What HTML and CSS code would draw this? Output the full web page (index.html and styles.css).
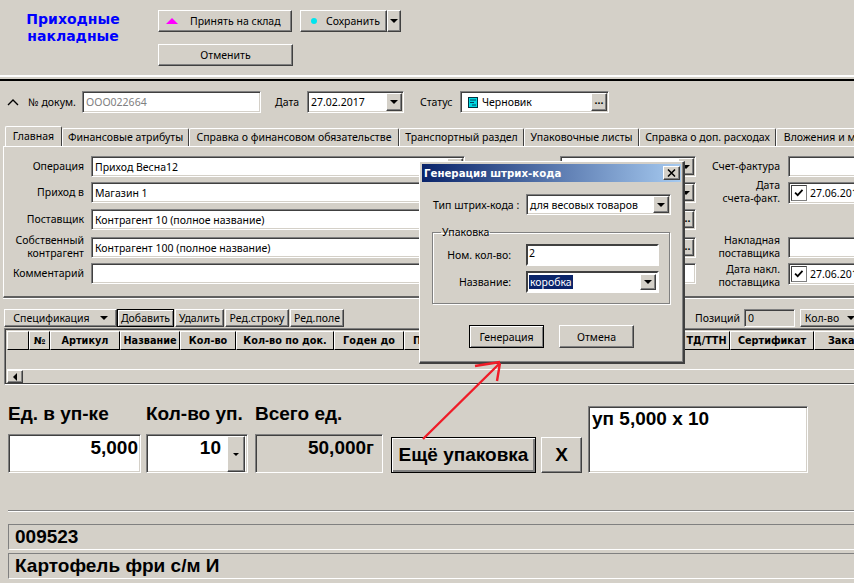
FILE: index.html
```html
<!DOCTYPE html>
<html lang="en">
  <head>
    <meta charset="UTF-8" />
    <title>Приходные накладные</title>
    <link rel="stylesheet" href="styles.css">
  </head>
  <body>
    <div class="page">
      <!-- Top buttons -->
      <div class="header">
        <div class="title">Приходные<br />накладные</div>
        <div class="actions">
          <div class="action-row">
            <div class="btn raised accept">
              <svg class="icon" width="12" height="6" viewBox="0 0 12 6"><polygon points="6,0 12,6 0,6" fill="#ff00ff" /></svg>
              <span>Принять на склад</span>
            </div>
            <div class="btn raised save">
              <svg class="icon" width="6" height="6" viewBox="0 0 6 6"><circle cx="3" cy="3" r="3" fill="#00e5ee" /></svg>
              <span>Сохранить</span>
            </div>
            <div class="btn raised save-drop"><i class="arrow"></i></div>
          </div>
          <div class="btn raised cancel">Отменить</div>
        </div>
      </div>
      <div class="divider"></div>

      <!-- Document row -->
      <div class="doc-row">
        <svg class="chevron" width="12" height="7" viewBox="0 0 12 7"><path d="M1 6 L6 1 L11 6" fill="none" stroke="#000" stroke-width="1.4" /></svg>
        <span class="doc-label">№ докум.</span>
        <div class="field sunken doc-num">OOO022664</div>
        <span class="date-label">Дата</span>
        <div class="field sunken doc-date">27.02.2017<div class="drop raised"><i class="arrow"></i></div></div>
        <span class="status-label">Статус</span>
        <div class="field sunken doc-status">
          <svg class="status-icon" width="10" height="11" viewBox="0 0 10 11">
            <rect x="0.5" y="0.5" width="9" height="10" fill="#00d8e0" stroke="#003040" />
            <path d="M2 3 H8 M2 5.5 H6 M4 8 H8" stroke="#004060" />
          </svg>
          Черновик
          <div class="drop raised dots">...</div>
        </div>
      </div>

      <!-- Tabs -->
      <div class="tabs">
        <div class="tab active">Главная</div>
        <div class="tab w-fin">Финансовые атрибуты</div>
        <div class="tab w-ref">Справка о финансовом обязательстве</div>
        <div class="tab w-trans">Транспортный раздел</div>
        <div class="tab w-pack">Упаковочные листы</div>
        <div class="tab w-extra">Справка о доп. расходах</div>
        <div class="tab w-att">Вложения и метки</div>
      </div>
      <div class="panel">
        <div class="form">
          <label class="lbl">Операция</label>
          <div class="field sunken">Приход Весна12<div class="drop raised"><i class="arrow"></i></div></div>
          <div class="field sunken mid"><div class="drop raised"><i class="arrow"></i></div></div>
          <label class="lbl">Счет-фактура</label>
          <div class="field sunken right"></div>

          <label class="lbl">Приход в</label>
          <div class="field sunken">Магазин 1</div>
          <div class="field sunken mid"><div class="drop raised"><i class="arrow"></i></div></div>
          <label class="lbl two">Дата<br />счета-факт.</label>
          <div class="field sunken right date-check">
            <svg class="check" width="16" height="16" viewBox="0 0 16 16"><path d="M3.5 7.5 L6.5 10.5 L12 4.5" fill="none" stroke="#000" stroke-width="2" /></svg>
            27.06.2017
          </div>

          <label class="lbl">Поставщик</label>
          <div class="field sunken">Контрагент 10 (полное название)</div>
          <div class="field sunken mid"><div class="drop raised dots">...</div></div>
          <span></span>
          <span></span>

          <label class="lbl two">Собственный<br />контрагент</label>
          <div class="field sunken">Контрагент 100 (полное название)</div>
          <div class="field sunken mid"><div class="drop raised dots">...</div></div>
          <label class="lbl two">Накладная<br />поставщика</label>
          <div class="field sunken right"></div>

          <label class="lbl">Комментарий</label>
          <div class="field sunken"></div>
          <div class="field sunken mid"></div>
          <label class="lbl two flat">Дата накл.<br />поставщика</label>
          <div class="field sunken right date-check">
            <svg class="check" width="16" height="16" viewBox="0 0 16 16"><path d="M3.5 7.5 L6.5 10.5 L12 4.5" fill="none" stroke="#000" stroke-width="2" /></svg>
            27.06.2017
          </div>
        </div>
      </div>

      <!-- Specification table -->
      <div class="toolbar">
        <div class="tool raised spec">Спецификация<i class="arrow"></i></div>
        <div class="tool raised add">Добавить</div>
        <div class="tool raised del">Удалить</div>
        <div class="tool raised row-edit">Ред.строку</div>
        <div class="tool raised cell-edit">Ред.поле</div>
        <span class="pos-label">Позиций</span>
        <div class="field sunken pos-input">0</div>
        <div class="tool raised qty">Кол-во<i class="arrow"></i></div>
      </div>
      <div class="grid-wrap">
        <div class="grid-head">
          <div class="cell c-blank"></div>
          <div class="cell c-num">№</div>
          <div class="cell c-art">Артикул</div>
          <div class="cell c-name">Название</div>
          <div class="cell c-qty">Кол-во</div>
          <div class="cell c-doc">Кол-во по док.</div>
          <div class="cell c-exp">Годен до</div>
          <div class="cell c-maker">Производитель</div>
          <div class="cell c-ttn">ТД/ТТН</div>
          <div class="cell c-cert">Сертификат</div>
          <div class="cell c-order">Заказ</div>
        </div>
        <div class="grid-body"></div>
        <div class="scroll">
          <div class="scroll-btn raised"><i class="arrow-left"></i></div>
        </div>
      </div>

      <!-- Packing -->
      <div class="packing">
        <div class="pack-col w-unit">
          <div class="pack-label">Ед. в уп-ке</div>
          <div class="pack-field sunken">5,000</div>
        </div>
        <div class="pack-col w-count">
          <div class="pack-label">Кол-во уп.</div>
          <div class="pack-field sunken count">10<div class="spin raised"><i class="arrow tiny"></i></div></div>
        </div>
        <div class="pack-col w-total">
          <div class="pack-label">Всего ед.</div>
          <div class="pack-field sunken total">50,000г</div>
        </div>
        <div class="big-btn more">Ещё упаковка</div>
        <div class="big-btn raised remove">X</div>
        <div class="memo sunken">уп 5,000 x 10</div>
      </div>
      <div class="rule"></div>
      <div class="info">009523</div>
      <div class="info">Картофель фри с/м И</div>

      <!-- Dialog -->
      <div class="dialog raised">
        <div class="dialog-title">
          <span>Генерация штрих-кода</span>
          <div class="close raised">
            <svg width="9" height="8" viewBox="0 0 9 8"><path d="M1 0.5 L8 7.5 M8 0.5 L1 7.5" stroke="#000" stroke-width="1.5" /></svg>
          </div>
        </div>
        <div class="dialog-type">
          <span>Тип штрих-кода :</span>
          <div class="field sunken type-field">для весовых товаров<div class="drop raised"><i class="arrow"></i></div></div>
        </div>
        <fieldset class="group">
          <legend>Упаковка</legend>
          <div class="group-row">
            <span class="group-label">Ном. кол-во:</span>
            <div class="field deep num-field">2</div>
          </div>
          <div class="group-row">
            <span class="group-label">Название:</span>
            <div class="field deep name-field"><span class="selected">коробка</span><div class="drop raised"><i class="arrow"></i></div></div>
          </div>
        </fieldset>
        <div class="dialog-btns">
          <div class="btn raised dlg-btn default">Генерация</div>
          <div class="btn raised dlg-btn">Отмена</div>
        </div>
      </div>

      <!-- Red arrow drawn over the screen -->
      <svg class="red-arrow" width="854" height="583" viewBox="0 0 854 583">
        <path d="M423 439 L499 364 M475 366 L500 362 M497 381 L500 363" fill="none" stroke="#f01c28" stroke-width="2.4" />
      </svg>
    </div>
  </body>
</html>
```

FILE: styles.css
```css
* {
  margin: 0;
  padding: 0;
  box-sizing: border-box;
}

body {
  background-color: #d4d0c8;
  font-family: "Noto Sans", sans-serif;
  font-size: 10.5px;
  color: #000;
}

.page {
  position: relative;
  width: 854px;
  height: 583px;
  overflow: hidden;
}

.raised {
  background-color: #d4d0c8;
  border: 1px solid;
  border-color: #fff #404040 #404040 #fff;
  box-shadow: inset -1px -1px 0 #808080;
}

.sunken {
  background-color: #fff;
  border: 1px solid;
  border-color: #808080 #fff #fff #808080;
  box-shadow: inset 1px 1px 0 #404040, inset -1px -1px 0 #d4d0c8;
}

.arrow {
  display: inline-block;
  width: 0;
  height: 0;
  border-left: 4px solid transparent;
  border-right: 4px solid transparent;
  border-top: 4px solid #000;
}

.arrow.tiny {
  border-left-width: 3px;
  border-right-width: 3px;
  border-top-width: 3px;
}

.arrow-left {
  display: inline-block;
  width: 0;
  height: 0;
  border-top: 4px solid transparent;
  border-bottom: 4px solid transparent;
  border-right: 4px solid #000;
}

/* Header */
.header {
  display: flex;
  height: 75px;
}

.title {
  width: 146px;
  padding-top: 11px;
  font-family: "DejaVu Sans", sans-serif;
  font-weight: bold;
  font-size: 14px;
  line-height: 17px;
  color: #0000ff;
  text-align: center;
}

.actions {
  margin-left: 12px;
  padding-top: 10px;
}

.action-row {
  display: flex;
  margin-bottom: 12px;
}

.btn {
  display: flex;
  align-items: center;
  justify-content: center;
  height: 22px;
}

.accept {
  width: 134px;
  justify-content: flex-start;
  padding-left: 7px;
}

.accept .icon {
  margin-right: 12px;
}

.save {
  width: 87px;
  margin-left: 8px;
  justify-content: flex-start;
  padding-left: 10px;
}

.save .icon {
  margin-right: 9px;
}

.save-drop {
  width: 14px;
}

.cancel {
  width: 135px;
}

.divider {
  height: 6px;
  border-top: 2px solid #fff;
  border-bottom: 2px solid #000;
}

/* Document row */
.field {
  position: relative;
  display: flex;
  align-items: center;
  height: 22px;
  padding-left: 3px;
  white-space: nowrap;
  overflow: hidden;
}

.drop {
  position: absolute;
  right: 1px;
  top: 1px;
  bottom: 1px;
  width: 16px;
  display: flex;
  align-items: center;
  justify-content: center;
}

.dots {
  font-weight: bold;
  line-height: 8px;
  padding-bottom: 4px;
}

.doc-row {
  display: flex;
  align-items: center;
  height: 22px;
  margin-top: 10px;
  padding-left: 7px;
}

.chevron {
  margin-right: 9px;
}

.doc-label {
  width: 54px;
}

.doc-num {
  width: 179px;
  color: #808080;
}

.date-label {
  margin-left: 14px;
  width: 32px;
}

.doc-date {
  width: 97px;
}

.status-label {
  margin-left: 16px;
  width: 40px;
}

.doc-status {
  width: 149px;
}

.status-icon {
  margin: 0 4px;
}

/* Tabs */
.tabs {
  display: flex;
  align-items: flex-end;
  height: 20px;
  margin-top: 13px;
  padding-left: 5px;
  white-space: nowrap;
}

.tab {
  flex: none;
  height: 18px;
  line-height: 16px;
  text-align: center;
  border: 1px solid;
  border-color: #fff #404040 transparent #fff;
  border-bottom: none;
  border-radius: 2px 2px 0 0;
}

.tab.active {
  width: 57px;
  height: 20px;
  line-height: 18px;
}

.w-fin { width: 127px; }
.w-ref { width: 210px; }
.w-trans { width: 125px; }
.w-pack { width: 115px; }
.w-extra { width: 137px; }
.w-att { width: 110px; }

.panel {
  height: 152px;
  margin-left: 3px;
  padding: 9px 0 0 1px;
  border-left: 1px solid #fff;
  border-top: 1px solid #fff;
  border-bottom: 2px solid #606060;
  box-shadow: 0 1px 0 #fff;
  overflow: hidden;
}

.form {
  display: grid;
  grid-template-columns: 79px 381px 231px 84px 108px;
  grid-template-rows: 26px 27px 28px 26px 22px;
  align-items: start;
}

.form > .field {
  height: 21px;
  margin-left: 7px;
}

.form > .mid {
  margin-left: 95px;
  width: 136px;
}

.form > .right {
  margin-left: 8px;
  width: 100px;
}

.lbl {
  text-align: right;
  line-height: 20px;
  white-space: nowrap;
}

.lbl.two {
  line-height: 13px;
  margin-top: -3px;
}

.lbl.two.flat {
  margin-top: 0;
}

.form > .date-check {
  height: 22px;
  padding-left: 2px;
}

.check {
  flex: none;
  margin-right: 3px;
  border: 1px solid;
  border-color: #404040 #808080 #808080 #404040;
}

/* Toolbar and grid */
.toolbar {
  display: flex;
  height: 18px;
  margin-top: 11px;
  padding-left: 4px;
}

.toolbar > * {
  flex: none;
}

.tool {
  display: flex;
  align-items: center;
  justify-content: center;
}

.spec {
  width: 113px;
  gap: 10px;
}

.add {
  width: 57px;
  border: 1px solid #000;
  box-shadow: inset 1px 1px 0 #fff, inset -1px -1px 0 #808080;
}

.del { width: 49px; margin-left: 1px; }
.row-edit { width: 64px; margin-left: 1px; }
.cell-edit { width: 54px; margin-left: 1px; }

.pos-label {
  margin-left: 351px;
  width: 49px;
  line-height: 18px;
}

.pos-input {
  width: 51px;
  height: 18px;
  background-color: #d4d0c8;
}

.qty {
  width: 60px;
  margin-left: 5px;
  gap: 8px;
}

.grid-wrap {
  height: 57px;
  margin: 1px 0 0 4px;
  padding: 2px 0 0 2px;
  border-top: 1px solid #808080;
  border-left: 1px solid #808080;
  border-bottom: 1px solid #fff;
  box-shadow: inset 1px 1px 0 #404040, inset 0 -1px 0 #404040;
}

.grid-head {
  display: flex;
  height: 19px;
}

.cell {
  flex: none;
  height: 19px;
  font-family: "DejaVu Sans", sans-serif;
  font-weight: bold;
  font-size: 9.7px;
  line-height: 17px;
  text-align: center;
  white-space: nowrap;
  overflow: hidden;
  background-color: #d4d0c8;
  border: 1px solid;
  border-color: #fff #000 #000 #fff;
}

.c-blank { width: 22px; }
.c-num { width: 21px; }
.c-art { width: 70px; }
.c-name { width: 60px; }
.c-qty { width: 56px; }
.c-doc { width: 98px; }
.c-exp { width: 70px; }
.c-maker { width: 279px; text-align: left; padding-left: 8px; }
.c-ttn { width: 47px; }
.c-cert { width: 84px; }
.c-order { width: 60px; }

.grid-body {
  height: 19px;
}

.scroll {
  height: 13px;
  border-top: 1px solid #fff;
}

.scroll-btn {
  width: 16px;
  height: 13px;
  display: flex;
  align-items: center;
  justify-content: center;
}

/* Packing */
.packing {
  display: flex;
  align-items: flex-end;
  height: 88px;
  padding-left: 8px;
  font-family: "Liberation Sans", sans-serif;
  font-weight: bold;
  font-size: 19px;
}

.pack-col { flex: none; }
.w-unit { width: 133px; margin-right: 5px; }
.w-count { width: 102px; margin-right: 7px; }
.w-total { width: 128px; margin-right: 8px; }

.pack-label {
  height: 30px;
  line-height: 20px;
  white-space: nowrap;
}

.pack-field {
  position: relative;
  height: 39px;
  padding: 2px 2px 0 0;
  line-height: 22px;
  text-align: right;
}

.pack-field.count {
  padding-right: 26px;
}

.pack-field.total {
  padding-right: 8px;
  background-color: #d4d0c8;
}

.spin {
  position: absolute;
  top: 1px;
  right: 2px;
  width: 18px;
  height: 36px;
  display: flex;
  align-items: center;
  justify-content: center;
}

.big-btn {
  flex: none;
  height: 36px;
  display: flex;
  align-items: center;
  justify-content: center;
  background-color: #d4d0c8;
}

.more {
  width: 145px;
  margin-right: 5px;
  border: 1px solid #000;
  box-shadow: inset 1px 1px 0 #fff, inset -2px -2px 0 #808080;
}

.remove {
  width: 41px;
  margin-right: 6px;
}

.memo {
  flex: none;
  width: 220px;
  height: 67px;
  padding: 2px 3px;
  line-height: 20px;
}

.rule {
  height: 2px;
  margin: 37px 0 0 8px;
  border-top: 1px solid #808080;
  border-bottom: 1px solid #fff;
}

.info {
  height: 26px;
  margin: 3px 0 0 8px;
  padding-left: 6px;
  font-family: "Liberation Sans", sans-serif;
  font-weight: bold;
  font-size: 19px;
  line-height: 23px;
  border-top: 1px solid #808080;
  border-left: 1px solid #808080;
  border-bottom: 1px solid #fff;
}

.rule + .info {
  margin-top: 12px;
}

/* Dialog */
.dialog {
  position: absolute;
  left: 419px;
  top: 161px;
  width: 266px;
  height: 203px;
  padding: 2px 2px 0;
  border-width: 1px 2px 2px 1px;
}

.dialog-title {
  display: flex;
  align-items: center;
  justify-content: space-between;
  height: 18px;
  padding: 0 1px 0 2px;
  font-family: "DejaVu Sans", sans-serif;
  font-weight: bold;
  font-size: 10.2px;
  color: #fff;
  background: linear-gradient(to right, #0a246a, #a6caf0);
}

.close {
  width: 17px;
  height: 14px;
  display: flex;
  align-items: center;
  justify-content: center;
}

.dialog-type {
  display: flex;
  align-items: center;
  margin-top: 12px;
  padding-left: 11px;
}

.dialog-type span {
  width: 93px;
}

.type-field {
  width: 145px;
  height: 21px;
}

.group {
  width: 238px;
  height: 78px;
  margin: 11px 0 0 10px;
  padding: 6px 0 0 0;
  border: 1px solid #808080;
  box-shadow: 1px 1px 0 #fff, inset 1px 1px 0 #fff;
}

.group legend {
  margin-left: 8px;
  padding: 0 1px;
  line-height: 12px;
}

.group-row {
  display: flex;
  align-items: center;
  margin-bottom: 5px;
}

.group-label {
  width: 78px;
  text-align: right;
}

.field.deep {
  margin-left: 15px;
  width: 133px;
  background-color: #fff;
  border: 2px solid;
  border-color: #404040 #fff #fff #404040;
}

.num-field {
  align-items: flex-start;
  padding-left: 1px;
}

.name-field {
  padding-left: 1px;
}

.selected {
  padding: 0 1px;
  background-color: #0a246a;
  color: #fff;
}

.dialog-btns {
  display: flex;
  gap: 15px;
  margin: 21px 0 0 47px;
}

.dlg-btn {
  width: 75px;
  height: 23px;
}

.dlg-btn.default {
  border: 1px solid #000;
  box-shadow: inset 1px 1px 0 #fff, inset -1px -1px 0 #808080;
}

.red-arrow {
  position: absolute;
  left: 0;
  top: 0;
}
```
